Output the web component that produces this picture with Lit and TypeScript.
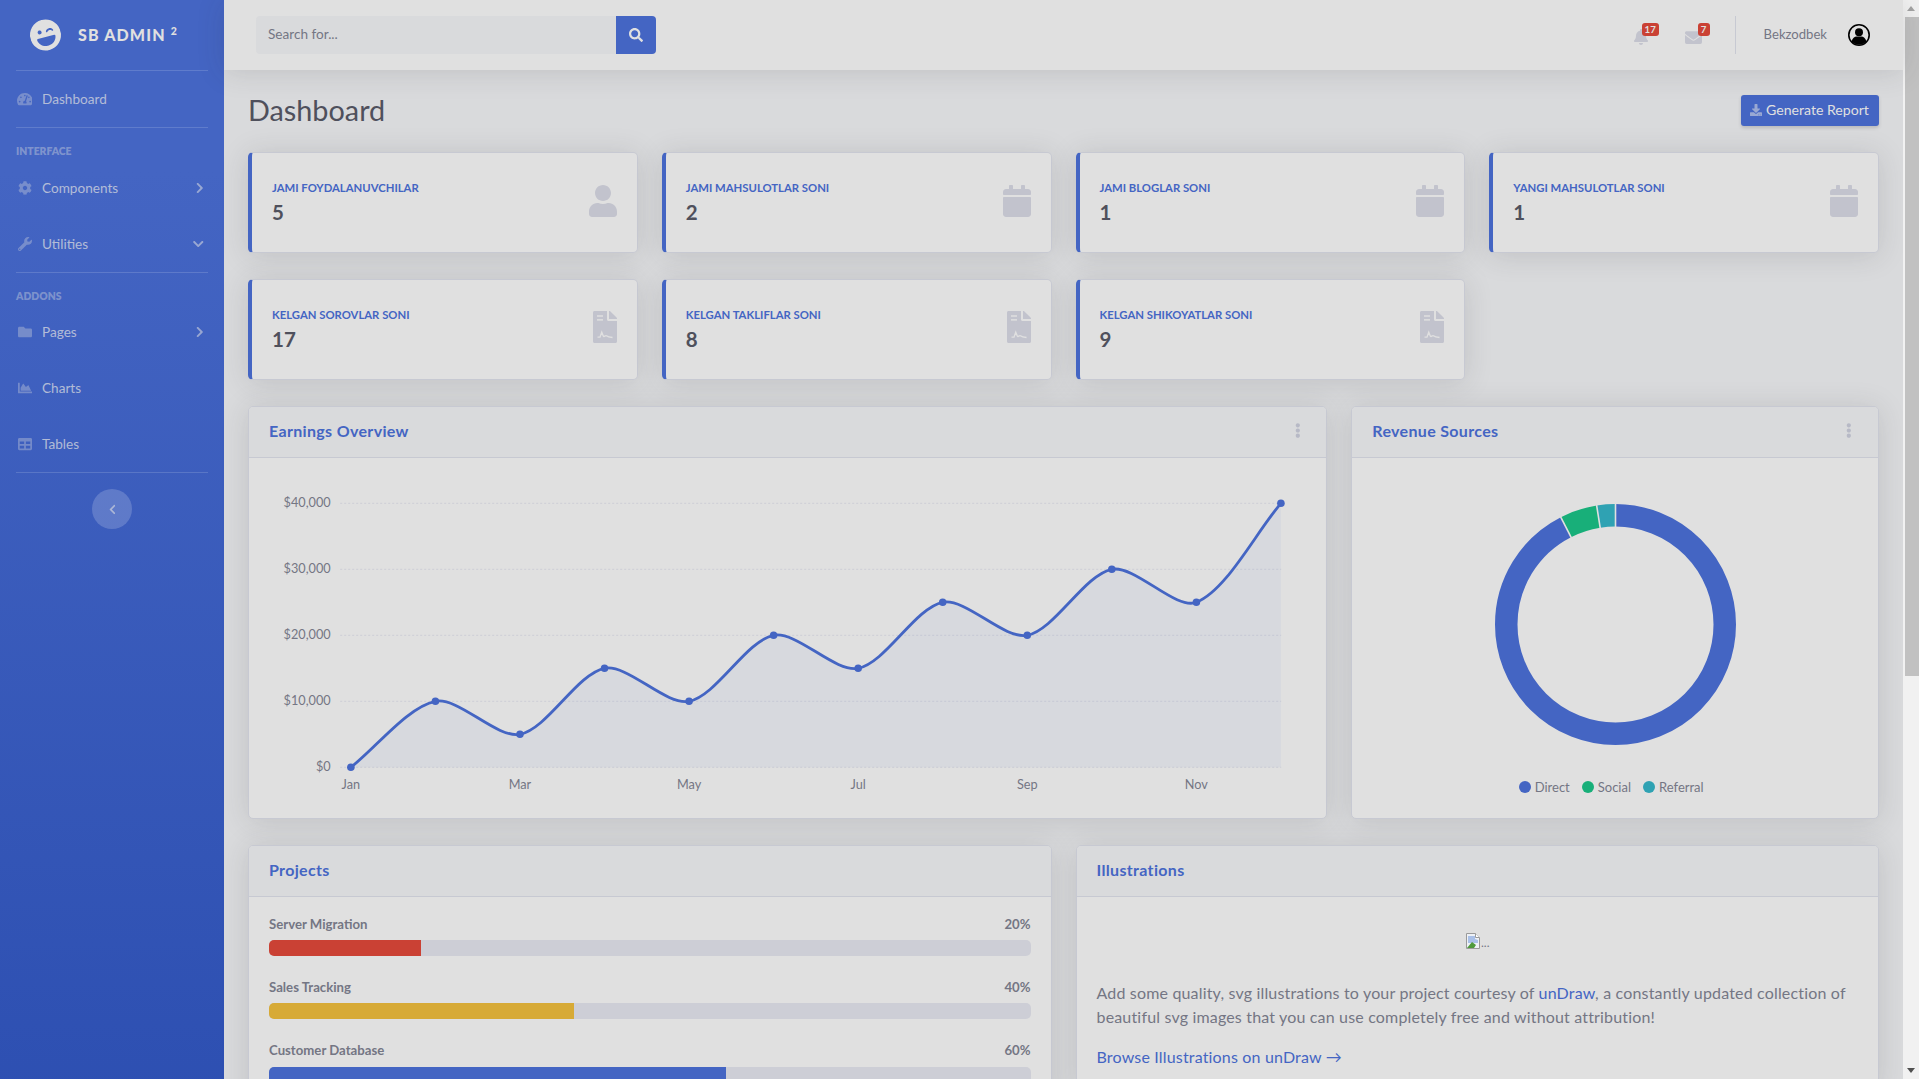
import { css, html, svg, LitElement, TemplateResult } from "lit";
import { customElement } from "lit/decorators.js";

const ICONS: Record<string, [number, string]> = {
    search: [512, "M505 442.7L405.3 343c-4.5-4.5-10.6-7-17-7H372c27.6-35.3 44-79.7 44-128C416 93.1 322.9 0 208 0S0 93.1 0 208s93.1 208 208 208c48.3 0 92.7-16.4 128-44v16.3c0 6.4 2.5 12.5 7 17l99.7 99.7c9.4 9.4 24.6 9.4 33.9 0l28.3-28.3c9.4-9.4 9.4-24.6.1-34zM208 336c-70.7 0-128-57.2-128-128 0-70.7 57.2-128 128-128 70.7 0 128 57.2 128 128 0 70.7-57.2 128-128 128z"],
    bell: [448, "M224 512c35.32 0 63.97-28.65 63.97-64H160.03c0 35.35 28.65 64 63.97 64zm215.39-149.71c-19.32-20.76-55.47-51.99-55.47-154.29 0-77.7-54.48-139.9-127.94-155.16V32c0-17.67-14.32-32-31.98-32s-31.98 14.33-31.98 32v20.84C118.56 68.1 64.08 130.3 64.08 208c0 102.3-36.15 133.53-55.47 154.29-6 6.45-8.66 14.16-8.61 21.71.11 16.4 12.98 32 32.1 32h383.8c19.12 0 32-15.6 32.1-32 .05-7.55-2.61-15.27-8.61-21.71z"],
    envelope: [512, "M502.3 190.8c3.9-3.1 9.7-.2 9.7 4.7V400c0 26.5-21.5 48-48 48H48c-26.5 0-48-21.5-48-48V195.6c0-5 5.7-7.8 9.7-4.7 22.4 17.4 52.1 39.5 154.1 113.6 21.1 15.4 56.7 47.8 92.2 47.6 35.7.3 72-32.8 92.3-47.6 102-74.1 131.6-96.3 154-113.7zM256 320c23.2.4 56.6-29.2 73.4-41.4 132.7-96.3 142.8-104.7 173.4-128.7 5.8-4.5 9.2-11.5 9.2-18.9v-19c0-26.5-21.5-48-48-48H48C21.5 64 0 85.5 0 112v19c0 7.4 3.4 14.3 9.2 18.9 30.6 23.9 40.7 32.4 173.4 128.7 16.8 12.2 50.2 41.8 73.4 41.4z"],
    download: [512, "M216 0h80c13.3 0 24 10.7 24 24v168h87.7c17.8 0 26.7 21.5 14.1 34.1L269.7 378.3c-7.5 7.5-19.8 7.5-27.3 0L90.1 226.1c-12.6-12.6-3.7-34.1 14.1-34.1H192V24c0-13.3 10.7-24 24-24zm296 376v112c0 13.3-10.7 24-24 24H24c-13.3 0-24-10.7-24-24V376c0-13.3 10.7-24 24-24h146.7l49 49c20.1 20.1 52.5 20.1 72.6 0l49-49H488c13.3 0 24 10.7 24 24zm-124 88c0-11-9-20-20-20s-20 9-20 20 9 20 20 20 20-9 20-20zm64 0c0-11-9-20-20-20s-20 9-20 20 9 20 20 20 20-9 20-20z"],
    user: [448, "M224 256c70.7 0 128-57.3 128-128S294.7 0 224 0 96 57.3 96 128s57.3 128 128 128zm89.6 32h-16.7c-22.2 10.2-46.9 16-72.9 16s-50.6-5.8-72.9-16h-16.7C60.2 288 0 348.2 0 422.4V464c0 26.5 21.5 48 48 48h352c26.5 0 48-21.5 48-48v-41.6c0-74.2-60.2-134.4-134.4-134.4z"],
    calendar: [448, "M12 192h424c6.6 0 12 5.4 12 12v260c0 26.5-21.5 48-48 48H48c-26.5 0-48-21.5-48-48V204c0-6.6 5.4-12 12-12zm436-44v-36c0-26.5-21.5-48-48-48h-48V12c0-6.6-5.4-12-12-12h-40c-6.6 0-12 5.4-12 12v52H160V12c0-6.6-5.4-12-12-12h-40c-6.6 0-12 5.4-12 12v52H48C21.5 64 0 85.5 0 112v36c0 6.6 5.4 12 12 12h424c6.6 0 12-5.4 12-12z"],
    file: [384, "M224 136V0H24C10.7 0 0 10.7 0 24v464c0 13.3 10.7 24 24 24h336c13.3 0 24-10.7 24-24V160H248c-13.2 0-24-10.8-24-24zM377 105L279.1 7c-4.5-4.5-10.6-7-17-7H256v128h128v-6.1c0-6.3-2.5-12.4-7-16.9z"],
    laugh: [496, "M248 8C111 8 0 119 0 256s111 248 248 248 248-111 248-248S385 8 248 8zm20.1 198.1c4-25.2 34.2-42.1 59.9-42.1s55.9 16.9 59.9 42.1c1.7 11.1-11.4 18.3-19.8 10.8l-9.5-8.5c-14.8-13.2-46.2-13.2-61 0L288 217c-8.4 7.4-21.6.3-19.9-10.9zM168 160c17.7 0 32 14.3 32 32s-14.3 32-32 32-32-14.3-32-32 14.3-32 32-32zm230.9 146C390 377 329.4 432 256 432h-16c-73.4 0-134-55-142.9-126-1.2-9.5 6.3-18 15.9-18h270c9.6 0 17.1 8.4 15.9 18z"],
    gauge: [576, "M288 32C128.94 32 0 160.94 0 320c0 52.8 14.25 102.26 39.06 144.8 5.61 9.62 16.3 15.2 27.44 15.2h443c11.14 0 21.83-5.58 27.44-15.2C561.75 422.26 576 372.8 576 320c0-159.06-128.94-288-288-288zm0 64c14.71 0 26.58 10.13 30.32 23.65-1.11 2.26-2.64 4.23-3.45 6.67l-9.22 27.67c-5.13 3.49-10.97 6.01-17.64 6.01-17.67 0-32-14.33-32-32S270.33 96 288 96zM96 384c-17.67 0-32-14.33-32-32s14.33-32 32-32 32 14.33 32 32-14.33 32-32 32zm48-160c-17.67 0-32-14.33-32-32s14.33-32 32-32 32 14.33 32 32-14.33 32-32 32zm246.77-72.41l-61.33 184C343.13 347.33 352 364.54 352 384c0 11.72-3.38 22.55-8.88 32H232.88c-5.5-9.45-8.88-20.28-8.88-32 0-33.94 26.5-61.43 59.9-63.59l61.34-184.01c4.17-12.56 17.73-19.45 30.36-15.17 12.57 4.19 19.35 17.79 15.17 30.36zm14.66 57.2l15.52-46.55c3.47-1.29 7.13-2.23 11.05-2.23 17.67 0 32 14.33 32 32s-14.33 32-32 32c-11.38-.01-20.89-6.28-26.57-15.22zM480 384c-17.67 0-32-14.33-32-32s14.33-32 32-32 32 14.33 32 32-14.33 32-32 32z"],
    cog: [512, "M487.4 315.7l-42.6-24.6c4.3-23.2 4.3-47 0-70.2l42.6-24.6c4.9-2.8 7.1-8.6 5.5-14-11.1-35.6-30-67.8-54.7-94.6-3.8-4.1-10-5.1-14.8-2.3L380.8 110c-17.9-15.4-38.5-27.3-60.8-35.1V25.8c0-5.6-3.9-10.5-9.4-11.7-36.7-8.2-74.3-7.8-109.2 0-5.5 1.2-9.4 6.1-9.4 11.7V75c-22.2 7.9-42.8 19.8-60.8 35.1L88.7 85.5c-4.9-2.8-11-1.9-14.8 2.3-24.7 26.7-43.6 58.9-54.7 94.6-1.7 5.4.6 11.2 5.5 14L67.3 221c-4.3 23.2-4.3 47 0 70.2l-42.6 24.6c-4.9 2.8-7.1 8.6-5.5 14 11.1 35.6 30 67.8 54.7 94.6 3.8 4.1 10 5.1 14.8 2.3l42.6-24.6c17.9 15.4 38.5 27.3 60.8 35.1v49.2c0 5.6 3.9 10.5 9.4 11.7 36.7 8.2 74.3 7.8 109.2 0 5.5-1.2 9.4-6.1 9.4-11.7v-49.2c22.2-7.9 42.8-19.8 60.8-35.1l42.6 24.6c4.9 2.8 11 1.9 14.8-2.3 24.7-26.7 43.6-58.9 54.7-94.6 1.5-5.5-.7-11.3-5.6-14.1zM256 336c-44.1 0-80-35.9-80-80s35.9-80 80-80 80 35.9 80 80-35.9 80-80 80z"],
    wrench: [512, "M507.73 109.1c-2.24-9.03-13.54-12.09-20.12-5.51l-74.36 74.36-67.88-11.31-11.31-67.88 74.36-74.36c6.62-6.62 3.43-17.9-5.66-20.16-47.38-11.74-99.55.91-136.58 37.93-39.64 39.64-50.55 97.1-34.05 147.2L18.74 402.76c-24.99 24.99-24.99 65.51 0 90.5 24.99 24.99 65.51 24.99 90.5 0l213.21-213.21c50.12 16.71 107.47 5.68 147.37-34.22 37.07-37.07 49.7-89.32 37.91-136.73zM64 472c-13.25 0-24-10.75-24-24 0-13.26 10.75-24 24-24s24 10.74 24 24c0 13.25-10.75 24-24 24z"],
    folder: [512, "M464 128H272l-64-64H48C21.49 64 0 85.49 0 112v288c0 26.51 21.49 48 48 48h416c26.51 0 48-21.49 48-48V176c0-26.51-21.49-48-48-48z"],
    area: [512, "M500 384c6.6 0 12 5.4 12 12v40c0 6.6-5.4 12-12 12H12c-6.6 0-12-5.4-12-12V76c0-6.6 5.4-12 12-12h40c6.6 0 12 5.4 12 12v308h436zM372.7 159.5L288 216l-85.3-113.7c-5.1-6.8-15.5-6.3-19.9 1L96 248v104h384l-89.9-187.8c-3.2-6.5-11.4-8.7-17.4-4.7z"],
    table: [512, "M464 32H48C21.49 32 0 53.49 0 80v352c0 26.51 21.49 48 48 48h416c26.51 0 48-21.49 48-48V80c0-26.51-21.49-48-48-48zM224 416H64v-96h160v96zm0-160H64v-96h160v96zm224 160H288v-96h160v96zm0-160H288v-96h160v96z"],
    right: [320, "M285.476 272.971L91.132 467.314c-9.373 9.373-24.569 9.373-33.941 0l-22.667-22.667c-9.357-9.357-9.375-24.522-.04-33.901L188.505 256 34.484 101.255c-9.335-9.379-9.317-24.544.04-33.901l22.667-22.667c9.373-9.373 24.569-9.373 33.941 0L285.475 239.03c9.373 9.372 9.373 24.568.001 33.941z"],
    down: [448, "M207.029 381.476L12.686 187.132c-9.373-9.373-9.373-24.569 0-33.941l22.667-22.667c9.357-9.357 24.522-9.375 33.901-.04L224 284.505l154.745-154.021c9.379-9.335 24.544-9.317 33.901.04l22.667 22.667c9.373 9.373 9.373 24.569 0 33.941L240.971 381.476c-9.373 9.372-24.569 9.372-33.942 0z"],
    left: [320, "M34.52 239.03L228.87 44.69c9.37-9.37 24.57-9.37 33.94 0l22.67 22.67c9.36 9.36 9.37 24.52.04 33.9L131.49 256l154.02 154.75c9.34 9.38 9.32 24.54-.04 33.9l-22.67 22.67c-9.37 9.37-24.57 9.37-33.94 0L34.52 272.97c-9.37-9.37-9.37-24.57 0-33.94z"],
    kebab: [192, "M96 184c39.8 0 72 32.2 72 72s-32.2 72-72 72-72-32.2-72-72 32.2-72 72-72zM24 80c0 39.8 32.2 72 72 72s72-32.2 72-72S135.8 8 96 8 24 40.2 24 80zm0 352c0 39.8 32.2 72 72 72s72-32.2 72-72-32.2-72-72-72-72 32.2-72 72z"],
};

const icon = (name: string, cls = "", extra?: TemplateResult) => {
    const [w, d] = ICONS[name];
    return html`<svg class="ic ${cls}" viewBox="0 0 ${w} 512" fill="currentColor"><path d=${d}></path>${extra}</svg>`;
};

// the lines and signature on the document icon, in the card colour
const FILE_MARKS = svg`
    <rect x="64" y="68" width="96" height="24" fill="#e0e0e0"></rect>
    <rect x="64" y="130" width="96" height="24" fill="#e0e0e0"></rect>
    <path d="M72 418H112L140 340L166 404C178 424 196 384 214 396C234 412 250 420 312 424" fill="none" stroke="#e0e0e0" stroke-width="22"></path>
`;

const STATS = [
    { label: "Jami foydalanuvchilar", value: "5", icon: "user" },
    { label: "Jami mahsulotlar soni", value: "2", icon: "calendar" },
    { label: "Jami bloglar soni", value: "1", icon: "calendar" },
    { label: "Yangi mahsulotlar soni", value: "1", icon: "calendar" },
    { label: "Kelgan sorovlar soni", value: "17", icon: "file" },
    { label: "Kelgan takliflar soni", value: "8", icon: "file" },
    { label: "Kelgan shikoyatlar soni", value: "9", icon: "file" },
];

const PROJECTS = [
    { name: "Server Migration", pct: 20, color: "#ca4134" },
    { name: "Sales Tracking", pct: 40, color: "#d7aa36" },
    { name: "Customer Database", pct: 60, color: "#4465c3" },
];

// earnings chart, coordinates are the card's own svg space
const EARNINGS = [0, 10000, 5000, 15000, 10000, 20000, 15000, 25000, 20000, 30000, 25000, 40000];
const X0 = 350.7 - 249;
const DX = 84.55;
const Y0 = 767.3 - 458;
const STEP = 66;
const POINTS = EARNINGS.map((v, i) => ({ x: X0 + i * DX, y: Y0 - (v / 10000) * STEP }));

function linePath() {
    const t = 0.3;
    const cps = POINTS.map((p, i) => {
        const a = POINTS[i - 1] || p;
        const b = POINTS[i + 1] || p;
        const d1 = Math.hypot(p.x - a.x, p.y - a.y);
        const d2 = Math.hypot(b.x - p.x, b.y - p.y);
        const s = d1 + d2 || 1;
        return {
            px: p.x - (t * d1 / s) * (b.x - a.x),
            py: p.y - (t * d1 / s) * (b.y - a.y),
            nx: p.x + (t * d2 / s) * (b.x - a.x),
            ny: p.y + (t * d2 / s) * (b.y - a.y),
        };
    });
    let d = `M${POINTS[0].x} ${POINTS[0].y}`;
    for (let i = 1; i < POINTS.length; i++) {
        d += `C${cps[i - 1].nx} ${cps[i - 1].ny} ${cps[i].px} ${cps[i].py} ${POINTS[i].x} ${POINTS[i].y}`;
    }
    return d;
}

@customElement("app-root")
export class AppRoot extends LitElement {
    navItem(name: string, label: string, arrow = "") {
        return html`
            <a class="nav-item">
                <span class="nav-ic">${icon(name)}</span>
                <span>${label}</span>
                ${arrow ? icon(arrow, "arrow") : ""}
            </a>
        `;
    }

    renderSidebar() {
        return html`
            <aside class="sidebar">
                <div class="brand">
                    <span class="brand-ic">${icon("laugh")}</span>
                    <span class="brand-text">SB ADMIN <sup>2</sup></span>
                </div>
                <hr />
                ${this.navItem("gauge", "Dashboard")}
                <hr />
                <div class="side-head first">Interface</div>
                ${this.navItem("cog", "Components", "right")}
                ${this.navItem("wrench", "Utilities", "down")}
                <hr />
                <div class="side-head">Addons</div>
                ${this.navItem("folder", "Pages", "right")}
                ${this.navItem("area", "Charts")}
                ${this.navItem("table", "Tables")}
                <hr />
                <button class="toggle">${icon("left")}</button>
            </aside>
        `;
    }

    renderTopbar() {
        return html`
            <header class="topbar">
                <div class="search">
                    <span class="search-input">Search for...</span>
                    <span class="search-btn">${icon("search")}</span>
                </div>
                <div class="top-right">
                    <span class="alert bell">${icon("bell")}<b class="badge">17</b></span>
                    <span class="alert mail">${icon("envelope")}<b class="badge">7</b></span>
                    <span class="top-div"></span>
                    <span class="user-name">Bekzodbek</span>
                    <svg class="avatar" viewBox="0 0 22 22">
                        <circle cx="11" cy="11" r="10.2" fill="#e0e0e0" stroke="#000" stroke-width="1.6"></circle>
                        <circle cx="11" cy="8.2" r="4"></circle>
                        <path d="M3.6 17.6c.8-3.4 3-5 5-5h4.8c2 0 4.2 1.6 5 5-1.8 2-4.4 3.2-7.4 3.2s-5.6-1.2-7.4-3.2z"></path>
                    </svg>
                </div>
            </header>
        `;
    }

    renderEarnings() {
        const line = linePath();
        const last = POINTS[POINTS.length - 1];
        const ticks = ["$0", "$10,000", "$20,000", "$30,000", "$40,000"];
        return html`
            <section class="card">
                <div class="card-head">
                    <h6>Earnings Overview</h6>
                    ${icon("kebab", "kebab")}
                </div>
                <svg class="earnings" viewBox="0 0 1077 360">
                    ${ticks.map((t, i) => {
                        const y = Y0 - i * STEP;
                        return svg`
                            <line x1="91" x2="1032" y1=${y} y2=${y} stroke="#cdced6" stroke-dasharray="2 2"></line>
                            <text class="tick" x="81.5" y=${y + 3.5} text-anchor="end">${t}</text>
                        `;
                    })}
                    ${["Jan", "Mar", "May", "Jul", "Sep", "Nov"].map((m, i) =>
                        svg`<text class="tick" x=${X0 + i * 2 * DX} y="331" text-anchor="middle">${m}</text>`)}
                    <path d="${line}L${last.x} ${Y0}L${X0} ${Y0}Z" fill="#4465c3" fill-opacity="0.05"></path>
                    <path d=${line} fill="none" stroke="#4465c3" stroke-width="2.8"></path>
                    ${POINTS.map(p => svg`<circle cx=${p.x} cy=${p.y} r="3.8" fill="#4465c3"></circle>`)}
                </svg>
            </section>
        `;
    }

    renderRevenue() {
        const segs = [
            { color: "#4465c3", from: 0, len: 92.5 },
            { color: "#18af79", from: 92.5, len: 5 },
            { color: "#2fa2b3", from: 97.5, len: 2.5 },
        ];
        const cuts = [0, 92.5, 97.5].map(p => (p / 100) * 2 * Math.PI);
        return html`
            <section class="card">
                <div class="card-head">
                    <h6>Revenue Sources</h6>
                    ${icon("kebab", "kebab")}
                </div>
                <div class="donut-body">
                    <svg class="donut" viewBox="0 0 241 241">
                        ${segs.map(s => svg`
                            <circle cx="120.5" cy="120.5" r="109.25" fill="none" stroke=${s.color} stroke-width="22.5"
                                pathLength="100" stroke-dasharray="${s.len} ${100 - s.len}" stroke-dashoffset=${-s.from}
                                transform="rotate(-90 120.5 120.5)"></circle>
                        `)}
                        ${cuts.map(a => svg`
                            <line x1=${120.5 + Math.sin(a) * 96} y1=${120.5 - Math.cos(a) * 96}
                                x2=${120.5 + Math.sin(a) * 122} y2=${120.5 - Math.cos(a) * 122}
                                stroke="#e0e0e0" stroke-width="1.6"></line>
                        `)}
                    </svg>
                    <div class="legend">
                        ${[["Direct", "#4465c3"], ["Social", "#18af79"], ["Referral", "#2fa2b3"]].map(([n, c]) => html`
                            <span class="legend-item"><i style="background:${c}"></i>${n}</span>
                        `)}
                    </div>
                </div>
            </section>
        `;
    }

    render() {
        return html`
            ${this.renderSidebar()}
            <div class="main">
                ${this.renderTopbar()}
                <main class="content">
                    <div class="page-head">
                        <h1>Dashboard</h1>
                        <a class="report">${icon("download")}Generate Report</a>
                    </div>
                    <div class="stats">
                        ${STATS.map(s => html`
                            <div class="stat">
                                <div class="stat-text">
                                    <div class="stat-label">${s.label}</div>
                                    <div class="stat-value">${s.value}</div>
                                </div>
                                ${icon(s.icon, "stat-ic", s.icon === "file" ? FILE_MARKS : undefined)}
                            </div>
                        `)}
                    </div>
                    <div class="charts">
                        ${this.renderEarnings()}
                        ${this.renderRevenue()}
                    </div>
                    <div class="bottom">
                        <section class="card">
                            <div class="card-head"><h6>Projects</h6></div>
                            <div class="card-body">
                                ${PROJECTS.map(p => html`
                                    <div class="project">
                                        <div class="project-label"><span>${p.name}</span><span>${p.pct}%</span></div>
                                        <div class="track"><div class="fill" style="width:${p.pct}%;background:${p.color}"></div></div>
                                    </div>
                                `)}
                            </div>
                        </section>
                        <section class="card">
                            <div class="card-head"><h6>Illustrations</h6></div>
                            <div class="card-body">
                                <div class="broken">
                                    <svg width="16" height="16" viewBox="0 0 16 16">
                                        <path d="M1.5.5h9l4 4v11h-13z" fill="#eef1f6" stroke="#9a9a9a"></path>
                                        <path d="M10.5.5v4h4" fill="#fff" stroke="#9a9a9a"></path>
                                        <path d="M3 3h7v3l3 1v3H3z" fill="#a9c0e8"></path>
                                        <path d="M2 15l5-6 4 3-2 3z" fill="#4f9a3c"></path>
                                    </svg><span>...</span>
                                </div>
                                <p>Add some quality, svg illustrations to your project courtesy of <a>unDraw</a>, a constantly updated collection of beautiful svg images that you can use completely free and without attribution!</p>
                                <a class="browse">Browse Illustrations on unDraw &rarr;</a>
                            </div>
                        </section>
                    </div>
                </main>
            </div>
            <div class="scrollbar">
                <span class="sb-btn up"></span>
                <div class="sb-track"><div class="sb-thumb"></div></div>
                <span class="sb-btn down"></span>
            </div>
        `;
    }

    static styles = css`
      :host {
        display: flex;
        height: 100vh;
        overflow: hidden;
        font-family: "Lato", "Open Sans", sans-serif;
        font-size: 16px;
        line-height: 1.5;
        color: #747684;
        background: #d9dadc;
      }

      .ic {
        height: 1em;
        display: block;
        flex: none;
      }

      hr {
        flex: none;
        width: 192px;
        margin: 0 16px;
        border: 0;
        border-top: 1px solid rgba(255, 255, 255, 0.15);
      }

      .sidebar {
        flex: 0 0 224px;
        display: flex;
        flex-direction: column;
        background: linear-gradient(180deg, #4465c3 10%, #1e41a6 100%) no-repeat;
        background-size: 100% 1711px;
      }

      .brand {
        height: 70px;
        flex: none;
        display: flex;
        align-items: center;
        padding-left: 30px;
        color: #e0e0e0;
      }

      .brand-ic {
        font-size: 32px;
        transform: rotate(-15deg);
        margin-right: 17px;
      }

      .brand-text {
        font-size: 16px;
        font-weight: 900;
        letter-spacing: 1.15px;
        white-space: nowrap;
      }

      .brand-text sup {
        font-size: 10.5px;
        vertical-align: 6px;
        line-height: 0;
      }

      .nav-item {
        flex: none;
        height: 56px;
        display: flex;
        align-items: center;
        padding: 0 20.5px 0 16px;
        font-size: 13.6px;
        color: rgba(224, 224, 224, 0.72);
      }

      .nav-ic {
        width: 17px;
        margin-right: 9px;
        display: flex;
        justify-content: center;
        font-size: 14px;
        color: rgba(224, 224, 224, 0.34);
      }

      .arrow {
        margin-left: auto;
        font-size: 12px;
        color: rgba(224, 224, 224, 0.55);
      }

      .side-head {
        flex: none;
        height: 31px;
        display: flex;
        align-items: flex-end;
        padding: 0 16px;
        font-size: 10.4px;
        line-height: 15px;
        font-weight: 800;
        text-transform: uppercase;
        color: rgba(224, 224, 224, 0.4);
      }

      .side-head.first {
        height: 32px;
        padding-bottom: 1px;
        box-sizing: border-box;
      }

      .toggle {
        flex: none;
        width: 40px;
        height: 40px;
        margin: 16px auto 0;
        padding: 0;
        border: 0;
        border-radius: 50%;
        background: rgba(255, 255, 255, 0.18);
        color: rgba(224, 224, 224, 0.6);
        font-size: 11px;
        display: flex;
        align-items: center;
        justify-content: center;
      }

      .main {
        flex: 1;
        min-width: 0;
        display: flex;
        flex-direction: column;
      }

      .topbar {
        flex: none;
        position: relative;
        z-index: 1;
        height: 70px;
        display: flex;
        align-items: center;
        justify-content: space-between;
        padding-left: 32px;
        background: #e0e0e0;
        box-shadow: 0 2.4px 28px rgba(51, 52, 60, 0.15);
      }

      .search {
        display: flex;
        width: 400px;
        height: 38px;
      }

      .search-input {
        flex: 1;
        display: flex;
        align-items: center;
        padding: 0 0 1px 12px;
        font-size: 13.6px;
        background: #d9dadc;
        border-radius: 4px 0 0 4px;
      }

      .search-btn {
        width: 40px;
        display: flex;
        align-items: center;
        justify-content: center;
        background: #4465c3;
        color: #e0e0e0;
        font-size: 14px;
        border-radius: 0 4px 4px 0;
      }

      .top-right {
        display: flex;
        align-items: center;
        padding-right: 33px;
        color: #c2c3cd;
      }

      .alert {
        position: relative;
        display: block;
      }

      .bell {
        font-size: 16px;
        margin: 4px 37px 0 0;
      }

      .mail {
        font-size: 17px;
        margin: 4px 33px 0 0;
      }

      .badge {
        position: absolute;
        top: -6px;
        left: 8px;
        height: 13px;
        min-width: 12px;
        padding: 0 3px;
        box-sizing: border-box;
        border-radius: 3px;
        background: #ca4134;
        color: #e0e0e0;
        font-size: 9.6px;
        line-height: 13px;
        font-weight: 700;
        text-align: center;
      }

      .mail .badge {
        left: 13px;
      }

      .top-div {
        width: 1px;
        height: 38px;
        background: #c7c9d2;
        margin-right: 28px;
      }

      .user-name {
        font-size: 13.1px;
        color: #747684;
        margin-right: 21px;
      }

      .avatar {
        width: 22px;
        height: 22px;
        display: block;
      }

      .content {
        flex: 1;
        min-height: 0;
        padding: 24px 24px 0;
      }

      .page-head {
        height: 33px;
        display: flex;
        align-items: center;
        justify-content: space-between;
        margin-bottom: 25.2px;
      }

      h1 {
        margin: 0 0 1px;
        font-size: 28.8px;
        font-weight: 400;
        line-height: 1.2;
        color: #4f505c;
      }

      .report {
        width: 138px;
        height: 31px;
        box-sizing: border-box;
        display: flex;
        align-items: center;
        padding: 0 0 1px 9px;
        gap: 4px;
        font-size: 14.1px;
        color: #e0e0e0;
        background: #4465c3;
        border-radius: 3px;
        box-shadow: 0 2px 3.5px rgba(51, 52, 60, 0.2);
      }

      .report .ic {
        font-size: 12px;
        color: rgba(224, 224, 224, 0.55);
      }

      .stats {
        display: grid;
        grid-template-columns: repeat(4, 1fr);
        gap: 25.7px 24px;
        margin-bottom: 25.7px;
      }

      .stat {
        height: 101px;
        box-sizing: border-box;
        display: flex;
        align-items: center;
        justify-content: space-between;
        padding: 0 20px;
        background: #e0e0e0;
        border: 1px solid #c7c9d2;
        border-left: 4px solid #4465c3;
        border-radius: 5px;
        box-shadow: 0 2.4px 28px rgba(51, 52, 60, 0.15);
      }

      .stat-text {
        margin-top: -1px;
      }

      .stat-label {
        font-size: 11.3px;
        line-height: 15px;
        font-weight: 700;
        text-transform: uppercase;
        color: #4465c3;
        margin-bottom: 5px;
      }

      .stat-value {
        font-size: 20.5px;
        line-height: 24px;
        font-weight: 700;
        color: #4f505c;
      }

      .stat-ic {
        font-size: 32px;
        color: #c2c3cd;
        margin-top: -4px;
      }

      .charts {
        display: grid;
        grid-template-columns: calc((100% + 24px) * 2 / 3 - 24px) 1fr;
        gap: 24px;
        margin-bottom: 26px;
      }

      .bottom {
        display: grid;
        grid-template-columns: 1fr 1fr;
        gap: 24px;
        align-items: start;
      }

      .card {
        background: #e0e0e0;
        border: 1px solid #c7c9d2;
        border-radius: 5px;
        box-shadow: 0 2.4px 28px rgba(51, 52, 60, 0.15);
        min-width: 0;
      }

      .card-head {
        height: 51px;
        box-sizing: border-box;
        display: flex;
        align-items: center;
        justify-content: space-between;
        padding: 0 20px 2px;
        background: #d9dadc;
        border-bottom: 1px solid #c7c9d2;
        border-radius: 4px 4px 0 0;
      }

      h6 {
        margin: 0;
        font-size: 16px;
        font-weight: 700;
        letter-spacing: 0.33px;
        color: #4465c3;
      }

      .kebab {
        font-size: 15px;
        color: #b7b9c6;
        margin-right: 6px;
      }

      .earnings {
        display: block;
        width: 100%;
        height: 360px;
      }

      .tick {
        font-size: 12.7px;
        fill: #747684;
        font-family: inherit;
      }

      .donut-body {
        height: 360px;
        box-sizing: border-box;
        padding-top: 46px;
        display: flex;
        flex-direction: column;
        align-items: center;
      }

      .donut {
        width: 241px;
        height: 241px;
        display: block;
      }

      .legend {
        display: flex;
        gap: 12px;
        margin: 34px 8px 0 0;
        font-size: 13px;
        line-height: 17px;
      }

      .legend-item {
        display: flex;
        align-items: center;
        gap: 4px;
      }

      .legend-item i {
        width: 12px;
        height: 12px;
        border-radius: 50%;
      }

      .card-body {
        padding: 20px;
      }

      .project {
        margin-bottom: 24px;
      }

      .project-label {
        display: flex;
        justify-content: space-between;
        font-size: 13.2px;
        line-height: 15.4px;
        font-weight: 700;
        margin-bottom: 8px;
      }

      .track {
        height: 16px;
        background: #cdced6;
        border-radius: 5px;
        overflow: hidden;
      }

      .fill {
        height: 100%;
      }

      .broken {
        height: 24.6px;
        margin: 16px 0 24px;
        display: flex;
        justify-content: center;
        align-items: flex-start;
        font-size: 12px;
      }

      .broken span {
        line-height: 20px;
      }

      p {
        margin: 0 0 16px;
        letter-spacing: 0.17px;
      }

      .browse {
        letter-spacing: 0.17px;
      }

      .card-body a {
        color: #4465c3;
      }

      .scrollbar {
        flex: 0 0 16px;
        display: flex;
        flex-direction: column;
        background: #f1f1f1;
      }

      .sb-btn {
        flex: none;
        height: 17px;
        display: flex;
        align-items: center;
        justify-content: center;
      }

      .sb-btn::before {
        content: "";
        border-left: 4px solid transparent;
        border-right: 4px solid transparent;
      }

      .up::before {
        border-bottom: 5px solid #a3a3a3;
      }

      .down::before {
        border-top: 5px solid #505050;
      }

      .sb-track {
        flex: 1;
        min-height: 0;
      }

      .sb-thumb {
        width: 14px;
        height: 659px;
        margin-left: 1.5px;
        background: #c1c1c1;
      }
    `
}
